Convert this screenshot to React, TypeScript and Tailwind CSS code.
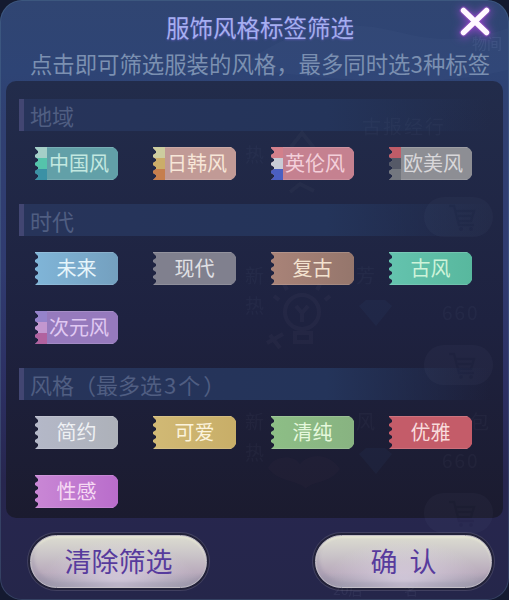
import clsx from "clsx";
import type { ReactNode } from "react";

type Tag = {
  label: string;
  bg: string;
  text: string;
  stripes?: string[];
};

type Section = {
  id: string;
  title: ReactNode;
  className: string;
  tags: Tag[];
};

const sections: Section[] = [
  {
    id: "region",
    title: "地域",
    className: "h-[105px]",
    tags: [
      { label: "中国风", bg: "bg-[#62a0a8]", text: "text-[#c3e8e0]", stripes: ["#a5cfc8", "#55c4ab", "#3b91a5"] },
      { label: "日韩风", bg: "bg-[#c19a96]", text: "text-[#f7e6d8]", stripes: ["#cdcd9f", "#cbad69", "#c67e4d"] },
      { label: "英伦风", bg: "bg-[#c58190]", text: "text-[#f3cfda]", stripes: ["#d3808b", "#c9ccd6", "#4b5fc2"] },
      { label: "欧美风", bg: "bg-[#8d8e94]", text: "text-[#d8d7da]", stripes: ["#c05c68", "#555967", "#73777f"] },
    ],
  },
  {
    id: "era",
    title: "时代",
    className: "h-[164px]",
    tags: [
      { label: "未来", bg: "bg-linear-to-r from-[#80b5d8] to-[#74a0bf]", text: "text-[#e6f5fb]" },
      { label: "现代", bg: "bg-[#80808e]", text: "text-[#e0e0e5]" },
      { label: "复古", bg: "bg-linear-to-r from-[#a98378] to-[#95766c]", text: "text-[#f3e2cf]" },
      { label: "古风", bg: "bg-linear-to-r from-[#64c3ae] to-[#58b89e]", text: "text-[#cdf3d9]" },
      { label: "次元风", bg: "bg-[#967abd]", text: "text-[#e0c9f2]", stripes: ["#9583cb", "#c397cf", "#b1629f"] },
    ],
  },
  {
    id: "style",
    title: (
      <>
        风格（最多选<span className="px-[2px]">3</span>个<span className="ml-[3px]">）</span>
      </>
    ),
    className: "h-[150px]",
    tags: [
      { label: "简约", bg: "bg-linear-to-r from-[#b4b8c8] to-[#adb1b9]", text: "text-[#eef0f3]" },
      { label: "可爱", bg: "bg-linear-to-r from-[#d1b975] to-[#c8ae68]", text: "text-[#fbf3dc]" },
      { label: "清纯", bg: "bg-linear-to-r from-[#8dbe86] to-[#88b381]", text: "text-[#e5f8dc]" },
      { label: "优雅", bg: "bg-[#c45c69]", text: "text-[#f8dbdc]" },
      { label: "性感", bg: "bg-linear-to-r from-[#c987d5] to-[#b96dcb]", text: "text-[#f6d9f4]" },
    ],
  },
];

function TagChip({ label, bg, text, stripes }: Tag) {
  return (
    <button
      className={clsx(
        "relative flex h-[33px] w-[83px] items-center justify-center text-[20px] leading-none",
        "[clip-path:polygon(0_0,78px_0,81px_2px,83px_5px,83px_28px,81px_31px,78px_33px,0_33px,3px_30px,3px_28px,0_26px,0_24px,3px_22px,3px_20px,0_18px,0_16px,3px_14px,3px_12px,0_10px,0_8px,3px_6px,3px_4px,0_1px)]",
        "shadow-[inset_0_1px_0_rgba(255,255,255,0.15),inset_0_-1px_0_rgba(255,255,255,0.12)]",
        bg,
        text,
      )}
    >
      {stripes && (
        <span className="absolute inset-y-0 left-0 flex w-3 flex-col">
          {stripes.map((color) => (
            <span key={color} className="flex-1" style={{ backgroundColor: color }} />
          ))}
        </span>
      )}
      <span className={clsx("relative -mt-px whitespace-nowrap", stripes && "ml-[5px]")}>{label}</span>
    </button>
  );
}

function SectionBlock({ title, className, tags }: Omit<Section, "id">) {
  return (
    <section className={className}>
      <h2 className="flex h-8 items-center border-l-[5px] border-[#424672] bg-linear-to-r from-[#27345a] from-0% via-[#24345a] via-65% to-transparent pl-[6px] text-[22px] leading-none text-[#505e82]">
        <span className="-mt-px whitespace-nowrap">{title}</span>
      </h2>
      <div className="mt-4 ml-4 grid grid-cols-[repeat(4,118px)] gap-y-[26px]">
        {tags.map((tag) => (
          <TagChip key={tag.label} {...tag} />
        ))}
      </div>
    </section>
  );
}

function PillButton({ children }: { children: string }) {
  return (
    <button className="flex h-[53px] w-[177px] items-center justify-center rounded-full border border-[#c4bfc6] bg-[radial-gradient(ellipse_at_50%_100%,rgba(229,220,237,0.75)_0%,rgba(229,220,237,0)_65%),linear-gradient(#dcdcd0_0%,#cbc6c9_35%,#b9abbc_72%,#a79eb0_84%,#9999a7_100%)] text-[27px] leading-none text-[#573b9d] shadow-[0_0_0_2px_#222239,0_0_0_3px_#414060,inset_3px_-5px_3px_rgba(150,140,165,0.35),inset_0_2px_2px_rgba(235,235,215,0.6)]">
      <span className="-mt-[2px] whitespace-pre">{children}</span>
    </button>
  );
}

// Shop list that shows faintly through the dialog
function ShopBackdrop() {
  return (
    <svg className="pointer-events-none absolute inset-0" width="509" height="600" viewBox="0 0 509 600" fill="none">
      <g opacity="0.035" fill="#a5b4d8">
        {[197, 345, 493].map((y) => (
          <g key={y}>
            <rect x="424" y={y} width="69" height="40" rx="20" />
            <path
              d={`M449 ${y + 9}h5l5 19h15M456 ${y + 14}h18l-3 10h-13M458 ${y + 19}h14`}
              stroke="#4a5478"
              strokeWidth="2.5"
            />
            <circle cx="461" cy={y + 32} r="2" fill="#4a5478" />
            <circle cx="471" cy={y + 32} r="2" fill="#4a5478" />
          </g>
        ))}
      </g>
      <g opacity="0.05" fill="#4786c9">
        <path d="M359 306l7-6h19l7 6-16 20z" />
        <path d="M359 454l7-6h19l7 6-16 20z" />
      </g>
      <g opacity="0.04" stroke="#b9a6bc" strokeWidth="4">
        <circle cx="302" cy="312" r="17" />
        <path d="M296 306l6 7 6-7M302 313v9M295 333h16v9h-16zM279 300l-5-4M325 300l5-4M287 290l-3-6M317 290l3-6" />
        <path d="M267 343l16-9M270 335l10 13M291 147l11-14 12 15M290 192l10-8 14 7" />
      </g>
      <g opacity="0.025" fill="#db6fa0">
        <path d="M268 468c5-12 25-15 32-4 9-12 30-11 40 5-10 15-29 12-34 20-7-9-29-7-38-21z" />
      </g>
      <g opacity="0.04" fill="#a9b4d4" fontSize="19" letterSpacing="2">
        <text x="442" y="320">660</text>
        <text x="442" y="468">660</text>
        <text x="362" y="134">古报经行</text>
        <text x="356" y="429">风</text>
        <text x="245" y="283">新</text>
        <text x="245" y="313">热</text>
        <text x="245" y="429">新</text>
        <text x="245" y="460">热</text>
        <text x="245" y="162">热</text>
        <text x="356" y="283">芳</text>
        <text x="470" y="429">包</text>
      </g>
      <g opacity="0.08" fill="#a9b4d4" fontSize="14">
        <text x="333" y="595">20后</text>
        <text x="404" y="595">名</text>
      </g>
      <path d="M238 68c40-30 90-55 160-36 40 10 70 10 110-4v42c-80 20-180 10-270-2z" fill="#7086b2" opacity="0.05" />
      <text x="472" y="49" fontSize="15" fill="#91a6d0" opacity="0.12">物间</text>
    </svg>
  );
}

export default function App() {
  return (
    <main className="h-[600px] w-[509px] overflow-hidden bg-[#141a30] font-['Noto_Sans_CJK_SC',sans-serif] font-normal">
      <div className="relative flex h-[600px] flex-col overflow-hidden rounded-[22px] bg-[linear-gradient(#304572_0%,#2e4475_12%,#304072_20%,#303b70_45%,#2c2f62_65%,#27264f_80%,#25264a_100%)] shadow-[inset_0_0_0_1px_rgba(90,130,155,0.3)]">
        <header className="flex h-[81px] flex-col items-center whitespace-nowrap">
          <h1 className="mt-[14px] ml-[11px] text-[23.5px] leading-[26px] font-normal text-[#a6aef0] [text-shadow:0_1px_2px_#5757ae]">
            服饰风格标签筛选
          </h1>
          <p className="mt-[10px] ml-[11px] text-[22.4px] leading-[26px] font-normal text-[#7b90b1]">
            点击即可筛选服装的风格，最多同时选3种标签
          </p>
        </header>

        <div className="mx-[6px] h-[437px] rounded-[10px] bg-linear-to-b from-[#222c4b] via-[#1e2240] via-55% to-[#1b1b2f] pt-[18px] pr-[13px] pl-[13px]">
          {sections.map(({ id, ...section }) => (
            <SectionBlock key={id} {...section} />
          ))}
        </div>

        <footer className="flex justify-between pt-[17px] pr-[17px] pl-[30px]">
          <PillButton>清除筛选</PillButton>
          <PillButton>确  认</PillButton>
        </footer>

        <ShopBackdrop />

        <button className="absolute top-[6px] right-[18px]" aria-label="关闭">
          <svg
            width="32"
            height="32"
            viewBox="0 0 32 32"
            fill="none"
            className="overflow-visible drop-shadow-[0_1px_5px_#9a48d0]"
          >
            <path d="M4.5 4.5l23 22M27.5 4.5l-23 22" stroke="#8c48bd" strokeWidth="8" strokeLinecap="round" opacity="0.6" />
            <path d="M4.5 4.5l23 22M27.5 4.5l-23 22" stroke="#fff8ff" strokeWidth="5.5" strokeLinecap="round" />
          </svg>
        </button>
      </div>
    </main>
  );
}
